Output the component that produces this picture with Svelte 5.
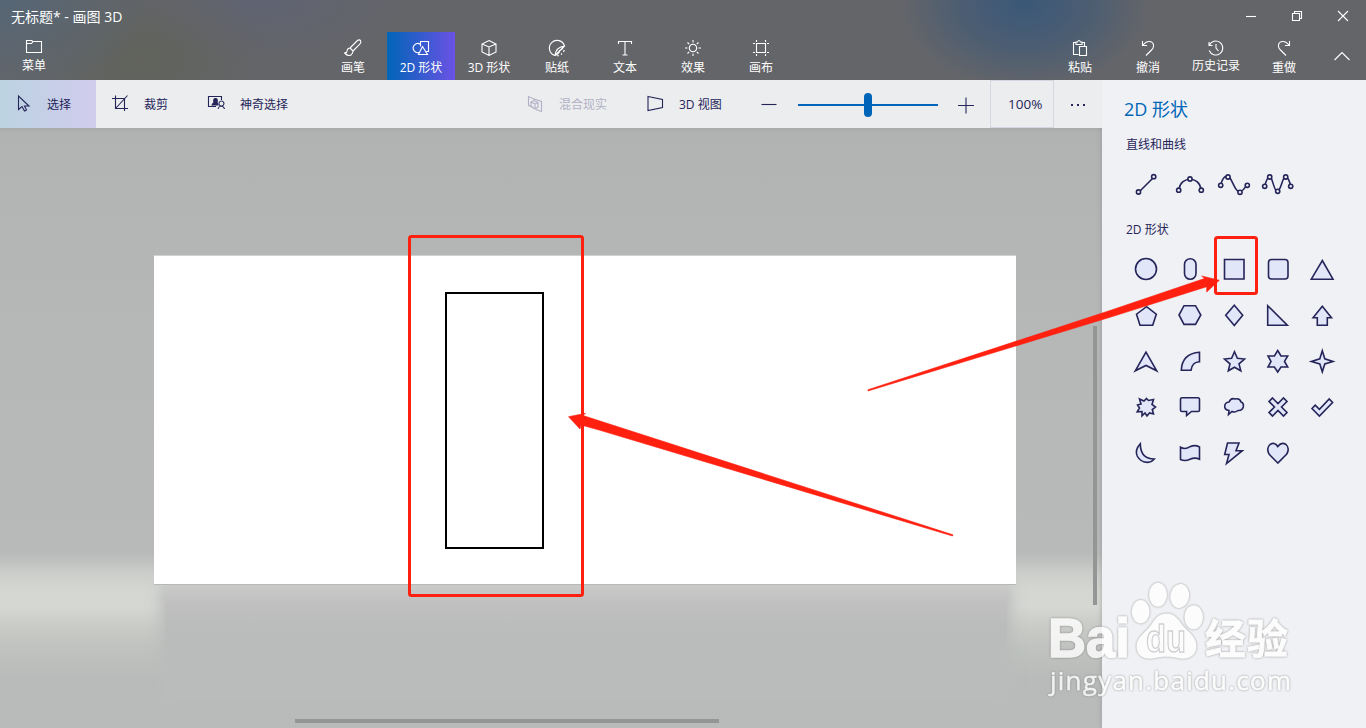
<script lang="ts">
	type Icon = { label: string; d: string; active?: boolean };

	// icon paths are centred on 0,0
	const tabs: Icon[] = [
		{ label: '画笔', d: 'M-3 0 L4 -7 Q6 -9 7.5 -7.5 Q8.5 -6 7 -4 L0 3 M-3 0 L0 3 M-3 0 Q-5.5 0 -6 3 Q-6 5 -8 5.5 Q-5 8.5 -2 7 Q0 5.5 0 3 M-8 4 V6' },
		{ label: '2D 形状', d: 'M-1 4 A4.5 4.5 0 1 1 -.5 -3.5 M-.5 -1.5 V-6.5 H7.5 V3.5 H5.5 M1.5 -1.5 L-2.5 6.5 H6.5 Z', active: true },
		{ label: '3D 形状', d: 'M0 -7.5 L7 -4 V4 L0 7.5 L-7 4 V-4 Z M-7 -4 L0 -1 L7 -4 M0 -1 V7.5' },
		{ label: '贴纸', d: 'M-2 7.5 A7.7 7.7 0 1 1 7.5 -2 Q-1 -1 -2 7.5 M-2 7.5 L7.5 -2 M-2 7.5 Q3 5 2.5 2.5 Q5 2 7.5 -2 M0 7.7 H2 M4 6.5 L5 5.5 M6.5 4 L7.3 2' },
		{ label: '文本', d: 'M-6.5 -4 V-6.5 H6.5 V-4 M0 -6.5 V7 M-2.5 7 H2.5' },
		{ label: '效果', d: 'M3.7 0 A3.7 3.7 0 1 1 -3.7 0 A3.7 3.7 0 1 1 3.7 0 M0 -8 V-5.5 M0 5.5 V8 M-8 0 H-5.5 M5.5 0 H8 M-5.5 -5.5 L-3.8 -3.8 M5.5 -5.5 L3.8 -3.8 M-5.5 5.5 L-3.8 3.8 M5.5 5.5 L3.8 3.8' },
		{ label: '画布', d: 'M-4.5 -4.5 H4.5 V4.5 H-4.5 Z M-4.5 -8 V-6 M4.5 -8 V-6 M-4.5 6 V8 M4.5 6 V8 M-8 -4.5 H-6 M6 -4.5 H8 M-8 4.5 H-6 M6 4.5 H8' }
	];

	const actions: Icon[] = [
		{ label: '粘贴', d: 'M-1.5 6.5 H-6.5 V-5.5 H-4 M2 -5.5 H4.5 V-2 M-4 -3.5 V-6 H-2.5 Q-1 -9 .5 -6 H2 V-3.5 Z M-.5 -1.5 H6.5 V7.5 H-.5 Z' },
		{ label: '撤消', d: 'M-5.5 -7 V-2.5 H-1 M-5.5 -2.5 Q-2 -7 2 -6.5 Q6 -5.5 5.5 -1.5 Q5.3 0 4 1.5 L-2 7.5' },
		{ label: '历史记录', d: 'M-7 -6 V-2.5 H-3.5 M-6.8 -2.5 A7 7 0 1 1 -6.8 2.5 M0 -4 V0 L2.5 3' },
		{ label: '重做', d: 'M5.5 -7 V-2.5 H1 M5.5 -2.5 Q2 -7 -2 -6.5 Q-6 -5.5 -5.5 -1.5 Q-5.3 0 -4 1.5 L2 7.5' }
	];

	const lines = [
		{ d: 'M-6 7 L7 -6', dots: [[-7.5, 8], [7.7, -7.3]] },
		{ d: 'M-11 5 C-9 -8 9 -8 11 5', dots: [[-11.3, 6.2], [0, -5], [11.3, 6.2]] },
		{ d: 'M-13 0 C-11 -7 -8 -10 -4 -6 C0 0 1 7 5 7.5 C9 8 11 4 12.5 1', dots: [[-13.3, 1.3], [-6, -7], [6, 8.3], [13.3, 1.3]] },
		{ d: 'M-13 1 C-10 -9 -8 -9 -6 -4 C-4 2 -3 7 -1 7.5 C2 7 3 1 5 -4 C7 -9 10 -8 12.5 1', dots: [[-13.3, 2.3], [-8.3, -7], [-.3, 7.3], [7.7, -7], [12.7, 2.3]] }
	];

	const shapes = [
		'M10.5 0 A10.5 10.5 0 1 1 -10.5 0 A10.5 10.5 0 1 1 10.5 0 Z',
		'M-5.5 -4.5 A5.7 5.7 0 0 1 6 -4.5 V4.5 A5.7 5.7 0 0 1 -5.5 4.5 Z',
		'M-9.5 -9.5 H10 V10 H-9.5 Z',
		'M-6.5 -9.5 H7 Q10 -9.5 10 -6.5 V7 Q10 10 7 10 H-6.5 Q-9.5 10 -9.5 7 V-6.5 Q-9.5 -9.5 -6.5 -9.5 Z',
		'M.3 -8.5 L11 10.2 H-10.7 Z',
		'M.5 -8.3 L10.3 -.8 L6.7 10.3 H-6 L-9.5 -.8 Z',
		'M-6 -9.3 H5.5 L10.8 0 L5.5 9.4 H-6 L-11 0 Z',
		'M.3 -9.8 L8.7 .3 L.3 10.4 L-8.3 .3 Z',
		'M-10.3 -9.3 L9.3 10.2 H-10.3 Z',
		'M.3 -8.8 L9.5 2.7 H5.3 V10.3 H-4.7 V2.7 H-8.9 Z',
		'M0 -8.8 L10.7 9.8 L0 4.5 L-10.7 9.8 Z',
		'M9.5 -8.7 V.7 Q2 1 1 9.3 H-8.7 Q-8 -7.5 9.5 -8.7 Z',
		'M.5 -9.3 L3.4 -2.7 L10.5 -2 L5 2.8 L6.8 9.8 L.5 6.2 L-5.7 9.8 L-4 2.8 L-9.5 -2 L-2.4 -2.7 Z',
		'M-.3 -10.5 L3 -5 H9.7 L6.5 .4 L9.7 6 H3 L-.3 11 L-3.6 6 H-10 L-7 .4 L-10 -5 H-3.6 Z',
		'M.3 -10.3 L2.8 -2.2 L11 .4 L2.8 3 L.3 10.8 L-2.2 3 L-10.6 .4 L-2.2 -2.2 Z',
		'M.5 -8.5 L2.5 -6.5 L7.5 -7.5 L6 -2.5 L9.5 0 L6.3 2.5 L7.5 7 L3.5 6 L1 9 L-1 6 L-4 8.8 L-4 4.5 L-8.8 4.8 L-6.5 1 L-8.5 -2 L-5 -3 L-6.5 -8 L-2 -6 Z',
		'M-8 -9.3 H8 Q9.5 -9.3 9.5 -7.5 V3 Q9.5 4.5 8 4.5 H1.5 L-3.4 8.5 V4.5 H-8 Q-9.5 4.5 -9.5 3 V-7.5 Q-9.5 -9.3 -8 -9.3 Z',
		'M-5 -5 Q-3 -9.5 1 -8 Q6 -9 7 -5 Q10 -4 9.3 0 Q8 4 4 3.5 Q1 6 -2 4.5 L-5.5 7.5 L-5 3.5 Q-9.5 3 -9.3 -1 Q-9 -4.5 -5 -5 Z',
		'M-5.5 -9 L0 -3.5 L5.5 -9 L9 -5.5 L3.5 0 L9 5.5 L5.5 9 L0 3.5 L-5.5 9 L-9 5.5 L-3.5 0 L-9 -5.5 Z',
		'M-10 1.5 L-6.8 -1.8 L-2.6 2.3 L7.2 -8 L10.6 -4.5 L-2.6 9 Z',
		'M-5.7 -9.3 Q-11.5 -3 -8.8 3 Q-5.5 9.5 2 9.4 Q6 9 8.3 6 Q-5.5 6 -5.7 -9.3 Z',
		'M-9.5 -5.8 Q-5 -3 0 -6.3 Q5 -8.5 9.5 -6 V6.3 Q5 4 0 6.3 Q-5 8.7 -9.5 6.5 Z',
		'M-6.5 -10 H5 L2 -2.3 H8.3 L-7.5 10.5 L-5 1.5 H-9.3 Z',
		'M-.2 10 L-9 1 Q-12 -5 -8 -8.5 Q-3.5 -11.5 -.2 -6.5 Q3.5 -11.5 8 -8.5 Q12 -5 8.8 1 Z'
	];
</script>

{#snippet tab(icon: Icon)}
	<button class="tab" class:active={icon.active} class:long={icon.label.length == 4}>
		<svg width="20" height="20" viewBox="-10 -10 20 20"><path d={icon.d} /></svg>
		<span>{icon.label}</span>
	</button>
{/snippet}

<div class="app">
	<header>
		<div class="titlebar">
			<span class="title">无标题* - 画图 3D</span>
			<div class="window-buttons">
				<svg width="46" height="32" viewBox="-23 -16 46 32"><path d="M-5 .5 H5" /></svg>
				<svg width="46" height="32" viewBox="-23 -16 46 32"><path d="M-4.5 -2.5 H2.5 V4.5 H-4.5 Z M-2.5 -2.5 V-4.5 H4.5 V2.5 H2.5" /></svg>
				<svg width="46" height="32" viewBox="-23 -16 46 32"><path d="M-5 -5 L5 5 M5 -5 L-5 5" /></svg>
			</div>
		</div>
		<nav>
			<div class="menu">
				{@render tab({ label: '菜单', d: 'M-7.5 -6.5 H-2.5 L-1 -5.5 H7.5 V5.5 H-7.5 Z M-7.5 -3.5 H-2.5 L-1 -5.5' })}
			</div>
			<div class="tabs">
				{#each tabs as t}
					{@render tab(t)}
				{/each}
			</div>
			<div class="actions">
				{#each actions as a}
					{@render tab(a)}
				{/each}
				<svg width="48" height="48" viewBox="-24 -24 48 48"><path d="M-7.5 4 L0 -3.5 L7.5 4" /></svg>
			</div>
		</nav>
	</header>

	<div class="body">
		<main>
			<div class="toolbar">
				<button class="tool selected">
					<svg width="24" height="24" viewBox="-12 -12 24 24"><path d="M-5.5 -8 V5.5 L-2 2.5 L.5 7 L2.5 6 L.5 2 H5 Z" /></svg>
					<span>选择</span>
				</button>
				<button class="tool">
					<svg width="24" height="24" viewBox="-12 -12 24 24"><path d="M-8 -5.5 H4.5 V7 M-4.5 -8.5 V4.5 H8 M7.5 -8.5 L-4.5 4.5" /></svg>
					<span>裁剪</span>
				</button>
				<button class="tool magic">
					<svg width="24" height="24" viewBox="-12 -12 24 24">
						<path d="M0 2.5 H-7.5 V-7.5 H5.5 V-4" />
						<path class="solid" d="M-4 1 Q-3 -1 -2 -1.5 Q-3 -5.5 -.5 -5.5 Q2 -5.5 1 -1.5 L2 1 Z" />
						<path d="M5.5 -3 A2.5 2.5 0 1 1 5.4 -3 M2 5 Q2.5 2.5 5 2 Q8 2.5 8.5 5" />
					</svg>
					<span>神奇选择</span>
				</button>
				<div class="spacer"></div>
				<button class="tool disabled">
					<svg width="24" height="24" viewBox="-12 -12 24 24"><path d="M-2 3 L-6.5 1.5 V-7.5 L-1 -5 V-3 M-1 -5 L6.5 -2.5 V7.5 L1 5.5 M-4 -2 L-1 -3.5 L3 -1.5 V3 L0 5 L-4 2.5 Z M-4 -2 L0 0 L3 -1.5 M0 0 V5" /></svg>
					<span>混合现实</span>
				</button>
				<button class="tool view">
					<svg width="24" height="24" viewBox="-12 -12 24 24"><path d="M-7 -7.5 L7.5 -4.5 V3.5 L-7 6.5 Z" /></svg>
					<span>3D 视图</span>
				</button>
				<div class="zoom">
					<svg width="24" height="24" viewBox="-12 -12 24 24"><path d="M-7.5 .5 H7.5" /></svg>
					<div class="slider"><i></i></div>
					<svg width="24" height="24" viewBox="-12 -12 24 24"><path d="M-8 1.5 H8 M0 -6.5 V9.5" /></svg>
				</div>
				<div class="percent">100%</div>
				<div class="more"><i></i><i></i><i></i></div>
			</div>

			<div class="stage">
				<div class="glow"></div>
				<div class="shadow"></div>
				<div class="paper">
					<div class="drawn"></div>
				</div>
				<div class="scroll-v"></div>
				<div class="scroll-h"></div>
			</div>
		</main>

		<aside>
			<h1>2D 形状</h1>
			<h2>直线和曲线</h2>
			<div class="grid lines">
				{#each lines as line}
					<svg width="44" height="46" viewBox="-22 -23 44 46">
						<path d={line.d} />
						{#each line.dots as [cx, cy]}
							<circle {cx} {cy} r="2.1" />
						{/each}
					</svg>
				{/each}
			</div>
			<h2>2D 形状</h2>
			<div class="grid shapes">
				{#each shapes as d}
					<svg width="44" height="46" viewBox="-22 -23 44 46"><path {d} /></svg>
				{/each}
			</div>
		</aside>
	</div>

	<!-- red annotations and watermark lie over everything -->
	<svg class="overlay" width="1366" height="728" viewBox="0 0 1366 728">
		<g class="marks">
			<rect x="409.5" y="236.5" width="173" height="359" rx="2" />
			<rect x="1215.5" y="237.5" width="41" height="56" rx="2" />
			<path d="M868 389.7 L1110 310.5 L1204.5 278.5 L1201.7 276 L1219.3 280.3 L1206.7 292 V286.7 L1110 317.3 L868 391 Z" />
			<path d="M953 534.8 L600 421 L583 415.5 L585.5 413.3 L568.5 416.7 L580 429 L581 425 L600 430.3 L952.5 536 Z" />
		</g>
		<g class="watermark">
			<text class="bai" x="1048" y="657" textLength="82" lengthAdjust="spacingAndGlyphs">Bai</text>
			<ellipse cx="1140.7" cy="611.7" rx="9" ry="11.7" />
			<ellipse cx="1158" cy="594.7" rx="9" ry="12" />
			<ellipse cx="1179.7" cy="596" rx="9.5" ry="12" transform="rotate(8 1179.7 596)" />
			<ellipse cx="1193.7" cy="617.3" rx="9.3" ry="12" />
			<path d="M1166.7 613.5 C1176 613.5 1179 621 1184 627 C1190 633 1197 638 1196.5 647 C1196 656 1188 660 1180 658.5 C1170 656 1162 656 1153 658.5 C1142 660 1136 654 1136.5 645 C1137 637 1146 632 1151 625 C1155 619 1158 613.5 1166.7 613.5 Z" />
			<text class="du" x="1146" y="652" textLength="40" lengthAdjust="spacingAndGlyphs">du</text>
			<text class="cn" x="1205" y="654" textLength="83">经验</text>
			<text class="url" x="1050" y="690" textLength="241">jingyan.baidu.com</text>
		</g>
	</svg>
</div>

<style>
	:global(body) {
		overflow: hidden;
	}

	.app {
		position: relative;
		display: flex;
		flex-direction: column;
		width: 1366px;
		height: 728px;
		font: 12px/16px "Open Sans", "Noto Sans CJK SC", sans-serif;
		color: #25255a;
	}

	button {
		display: flex;
		align-items: center;
		padding: 0;
		border: 0;
		background: none;
		font: inherit;
		color: inherit;
		white-space: nowrap;
	}

	svg {
		flex: none;
		fill: none;
		stroke: currentColor;
		stroke-width: 1.1;
	}

	header {
		height: 80px;
		color: #fff;
		background:
			radial-gradient(ellipse 125px 85px at 1025px 5px, #3b5878, #3b587899 50%, #3b587800),
			radial-gradient(ellipse 150px 100px at 0 0, #566675, #56667500),
			radial-gradient(ellipse 130px 90px at 140px 60px, #61635c, #61635c00),
			radial-gradient(ellipse 150px 60px at 255px 0, #606373, #60637300),
			#646569;
	}

	.titlebar {
		display: flex;
		justify-content: space-between;
		height: 32px;
	}

	.title {
		padding-left: 11px;
		font-size: 14px;
		line-height: 34px;
	}

	.window-buttons {
		display: flex;
		width: 138px;
	}

	nav {
		display: flex;
		height: 48px;
	}

	.menu {
		width: 319px;
	}

	.tabs,
	.actions {
		display: flex;
	}

	.actions {
		margin-left: auto;
	}

	.tab {
		flex-direction: column;
		width: 68px;
		height: 48px;
		padding-top: 6px;
	}

	.tab span {
		margin-top: 2px;
	}

	.menu .tab,
	.actions .tab {
		padding-top: 5px;
	}

	.actions .tab {
		padding-top: 6px;
	}

	.menu .tab span,
	.actions .tab.long span {
		margin-top: 1px;
	}

	.actions .tab.long span {
		margin-top: 0;
	}

	.tab.active {
		background: linear-gradient(90deg, #0065b8, #6a52e4);
	}

	.body {
		display: flex;
		height: 648px;
	}

	main {
		width: 1102px;
	}

	.toolbar {
		display: flex;
		height: 48px;
		background: #ecedee;
	}

	.tool {
		gap: 12px;
		width: 96px;
		padding-left: 12px;
	}

	.tool span {
		margin-top: 2px;
	}

	.tool.selected {
		gap: 11px;
		background: linear-gradient(90deg, #bcd3e2, #d0ccec);
	}

	.tool.magic {
		width: 110px;
	}

	.spacer {
		flex: 1;
	}

	.tool.disabled {
		width: 120px;
		color: #b1b1c6;
	}

	.tool.view {
		width: 126px;
	}

	.solid {
		fill: currentColor;
	}

	.zoom {
		display: flex;
		align-items: center;
		gap: 16px;
		width: 233px;
	}

	.slider {
		display: flex;
		align-items: center;
		justify-content: center;
		width: 140px;
		height: 24px;
		margin: 2px 0 0 1px;
		background: linear-gradient(#0065b8, #0065b8) center / 100% 2px no-repeat;
	}

	.slider i {
		width: 8px;
		height: 24px;
		border-radius: 4px;
		background: #0065b8;
	}

	.percent {
		width: 64px;
		box-sizing: border-box;
		padding-left: 17px;
		border: 1px solid #d5d7e0;
		font-size: 13.5px;
		line-height: 46px;
	}

	.more {
		display: flex;
		align-items: center;
		justify-content: center;
		gap: 4px;
		width: 48px;
		padding-top: 2px;
		box-sizing: border-box;
	}

	.more i {
		width: 2px;
		height: 2px;
		background: #25255a;
	}

	.stage {
		position: relative;
		height: 600px;
		overflow: hidden;
		background: linear-gradient(#a9abaa, #b1b3b2 5px, #b6b8b7 200px, #b9bbba);
	}

	.glow {
		position: absolute;
		top: 412px;
		left: 0;
		width: 100%;
		height: 140px;
		background: linear-gradient(#d5d7d300, #d5d7d30a 10%, #cbceca 24%, #d4d6d2 35%, #d5d7d3 48%, #cbcec9 58%, #c0c3bf 75%, #d5d7d300);
	}

	.shadow {
		position: absolute;
		top: 456px;
		left: 165px;
		width: 842px;
		height: 110px;
		background: linear-gradient(#cbccca, #bfc0bf 20px, #babcbb 45px);
		box-shadow: 0 6px 14px 4px #babcbb;
	}

	.paper {
		position: absolute;
		top: 128px;
		left: 154px;
		width: 862px;
		height: 328px;
		background: #fff;
		box-shadow: 0 1px 0 #b7b9b8, 0 -1px 0 #d0d2d1;
	}

	.drawn {
		position: absolute;
		top: 36px;
		left: 291px;
		width: 95px;
		height: 253px;
		border: 2px solid #000;
	}

	.scroll-v,
	.scroll-h {
		position: absolute;
		background: #949594;
	}

	.scroll-v {
		top: 198px;
		left: 1093px;
		width: 4px;
		height: 279px;
	}

	.scroll-h {
		top: 591px;
		left: 295px;
		width: 424px;
		height: 4px;
	}

	aside {
		width: 264px;
		box-sizing: border-box;
		padding: 16px 22px 0;
		background: #f0f1f4;
		box-shadow: 0 0 5px #8889;
		clip-path: polygon(0 0, 100% 0, 100% 100%, -6px 100%, -6px 48px, 0 48px);
		z-index: 1;
	}

	h1 {
		margin: 0;
		font-size: 18px;
		font-weight: 400;
		line-height: 26px;
		color: #0067b8;
	}

	h2 {
		margin: 15px 0 0 2px;
		font-size: 12px;
		font-weight: 400;
		line-height: 16px;
	}

	.grid {
		display: grid;
		grid-template-columns: repeat(5, 44px);
	}

	.grid svg {
		stroke-width: 1.6;
	}

	.lines {
		margin-top: 8px;
	}

	.lines + h2 {
		margin-top: 15px;
	}

	.lines circle {
		fill: #f0f1f4;
	}

	.shapes {
		margin-top: 8px;
	}

	.shapes path {
		fill: #e1e6f8;
	}

	.overlay {
		position: absolute;
		inset: 0;
		z-index: 2;
		pointer-events: none;
	}

	.marks rect {
		stroke: #ff2010;
		stroke-width: 3;
	}

	.marks path {
		fill: #ff2010;
		stroke: #ff2010;
		stroke-width: 0.6;
	}

	.watermark {
		fill: #fff;
		stroke: none;
		opacity: 0.8;
		filter: drop-shadow(0 0 1px #666c);
	}

	.bai {
		font: bold 55px "Liberation Sans", sans-serif;
		stroke: #fff;
		stroke-width: 1.5;
	}

	.du {
		font: bold 38px "Liberation Sans", sans-serif;
		fill: #fff;
		stroke: #c8c9cb;
		stroke-width: 1.3;
	}

	.cn {
		font: bold 41px "Noto Sans CJK SC", sans-serif;
		stroke: #fff;
		stroke-width: 0.8;
	}

	.url {
		font: 26px "Open Sans", sans-serif;
		stroke: #fff;
		stroke-width: 0.5;
	}
</style>
